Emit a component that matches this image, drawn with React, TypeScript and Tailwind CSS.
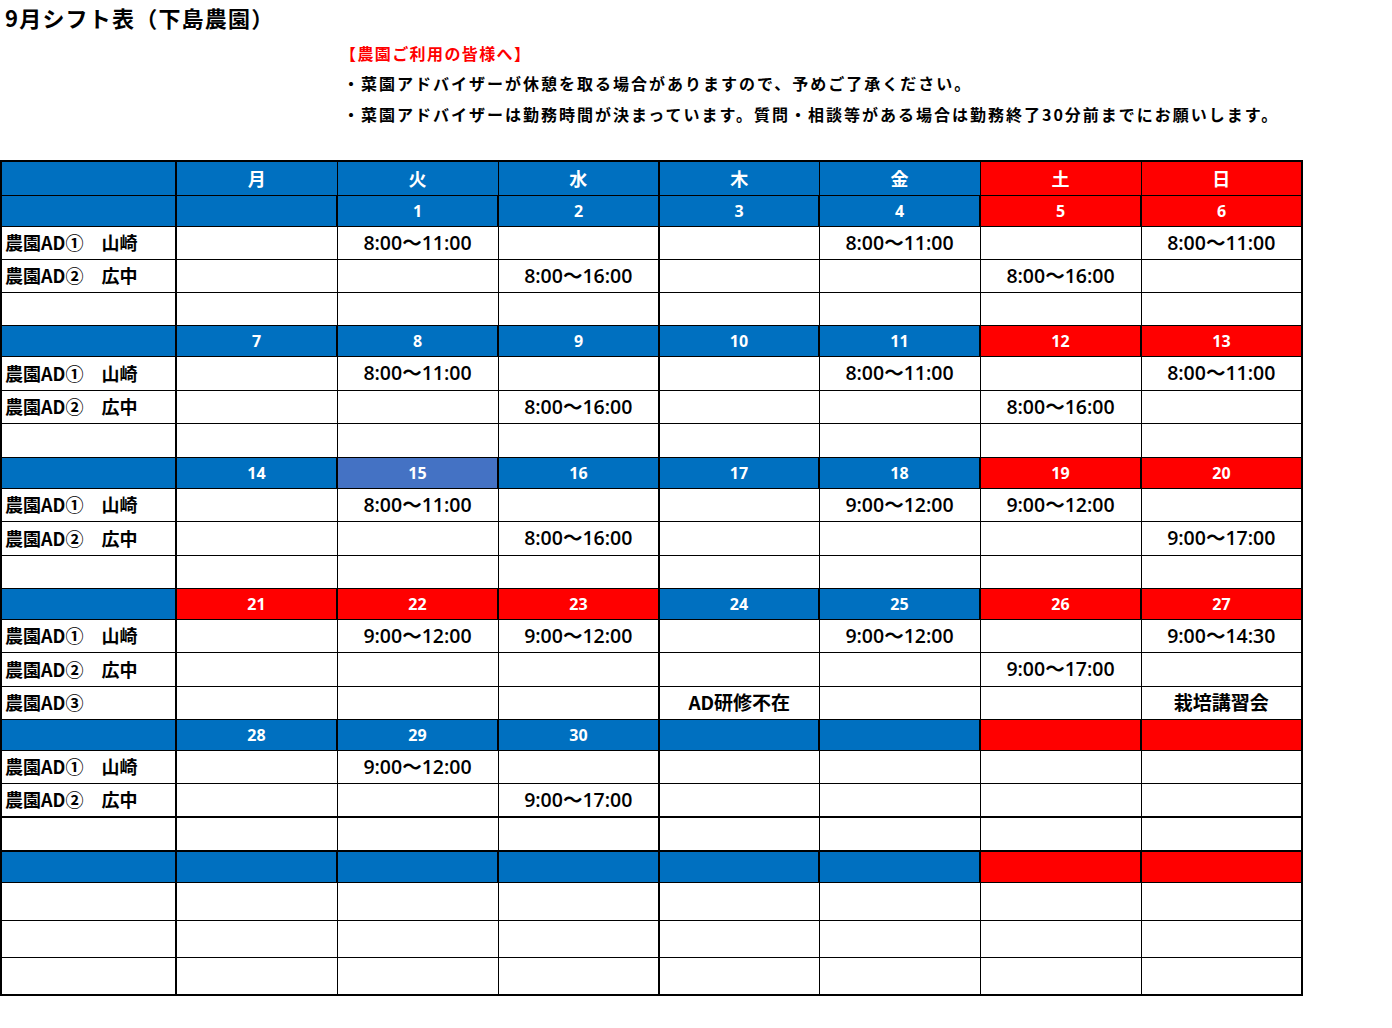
import React from "react";

type Color = "b" | "r" | "h";
type Row = { label: string; cells: string[]; h: string; thickBottom?: boolean };
type Week = { dates: [string, Color][]; rows: Row[]; thickTop?: boolean };

const T1 = "8:00～11:00";
const T2 = "8:00～16:00";
const T3 = "9:00～12:00";
const T4 = "9:00～17:00";
const E = ["", "", "", "", "", "", ""];

const std = (ds: string[], colors: Color[]) => ds.map((d, i) => [d, colors[i]] as [string, Color]);
const C1: Color[] = ["b", "b", "b", "b", "b", "r", "r"];

const weeks: Week[] = [
  {
    dates: std(["", "1", "2", "3", "4", "5", "6"], C1),
    rows: [
      { label: "農園AD①　山崎", cells: ["", T1, "", "", T1, "", T1], h: "h-[33px]" },
      { label: "農園AD②　広中", cells: ["", "", T2, "", "", T2, ""], h: "h-[33px]" },
      { label: "", cells: E, h: "h-[33px]" },
    ],
  },
  {
    dates: std(["7", "8", "9", "10", "11", "12", "13"], C1),
    rows: [
      { label: "農園AD①　山崎", cells: ["", T1, "", "", T1, "", T1], h: "h-[34px]" },
      { label: "農園AD②　広中", cells: ["", "", T2, "", "", T2, ""], h: "h-[33px]" },
      { label: "", cells: E, h: "h-[34px]" },
    ],
  },
  {
    dates: std(["14", "15", "16", "17", "18", "19", "20"], ["b", "h", "b", "b", "b", "r", "r"]),
    rows: [
      { label: "農園AD①　山崎", cells: ["", T1, "", "", T3, T3, ""], h: "h-[33px]" },
      { label: "農園AD②　広中", cells: ["", "", T2, "", "", "", T4], h: "h-[34px]" },
      { label: "", cells: E, h: "h-[33px]" },
    ],
  },
  {
    dates: std(["21", "22", "23", "24", "25", "26", "27"], ["r", "r", "r", "b", "b", "r", "r"]),
    rows: [
      { label: "農園AD①　山崎", cells: ["", T3, T3, "", T3, "", "9:00～14:30"], h: "h-[33px]" },
      { label: "農園AD②　広中", cells: ["", "", "", "", "", T4, ""], h: "h-[34px]" },
      { label: "農園AD③", cells: ["", "", "", "AD研修不在", "", "", "栽培講習会"], h: "h-[33px]" },
    ],
  },
  {
    dates: std(["28", "29", "30", "", "", "", ""], C1),
    rows: [
      { label: "農園AD①　山崎", cells: ["", T3, "", "", "", "", ""], h: "h-[33px]" },
      { label: "農園AD②　広中", cells: ["", "", T4, "", "", "", ""], h: "h-[34px]", thickBottom: true },
      { label: "", cells: E, h: "h-[34px]", thickBottom: true },
    ],
  },
  {
    dates: std(["", "", "", "", "", "", ""], C1),
    rows: [
      { label: "", cells: E, h: "h-[38px]" },
      { label: "", cells: E, h: "h-[37px]" },
      { label: "", cells: E, h: "h-[38px]" },
    ],
    thickTop: true,
  },
];

const bg = (c: Color) => (c === "r" ? "bg-[#ff0000]" : c === "h" ? "bg-[#4472c4]" : "bg-[#0070c0]");

const weekdays: [string, Color][] = [
  ["月", "b"],
  ["火", "b"],
  ["水", "b"],
  ["木", "b"],
  ["金", "b"],
  ["土", "r"],
  ["日", "r"],
];

const font = { fontFamily: '"Noto Sans CJK JP", "Noto Sans", sans-serif' };
const timeFont = { fontFamily: '"Open Sans", "Noto Sans CJK JP", sans-serif' };

export default function App() {
  return (
    <div className="bg-white w-[1392px] min-h-[1028px] text-black" style={font}>
      <div className="pl-[5px] pt-[2px] text-[22px] font-bold leading-[30px] tracking-[1.2px]">9月シフト表（下島農園）</div>
      <div className="ml-[343px] mt-[6px] text-[16px] font-bold tracking-[2px]">
        <div className="leading-[30px] text-[#ff0000] -ml-[3px] tracking-[1.4px]">【農園ご利用の皆様へ】</div>
        <div className="leading-[31px]">・菜園アドバイザーが休憩を取る場合がありますので、予めご了承ください。</div>
        <div className="leading-[31px]">・菜園アドバイザーは勤務時間が決まっています。質問・相談等がある場合は勤務終了30分前までにお願いします。</div>
      </div>
      <table className="mt-[30px] border-collapse table-fixed w-[1302px] border-2 border-black">
        <colgroup>
          <col className="w-[175px]" />
          <col className="w-[161px]" />
          <col className="w-[161px]" />
          <col className="w-[161px]" />
          <col className="w-[160px]" />
          <col className="w-[161px]" />
          <col className="w-[161px]" />
          <col className="w-[161px]" />
        </colgroup>
        <tbody>
          <tr className="h-[34px]">
            <td className="bg-[#0070c0] border border-black border-r-2"></td>
            {weekdays.map(([w, c], i) => (
              <td
                key={i}
                className={`${bg(c)} border border-black text-white text-center text-[18px] font-bold p-0 ${i === 3 ? "border-l-2" : ""}`}
              >
                {w}
              </td>
            ))}
          </tr>
          {weeks.map((wk, wi) => (
            <React.Fragment key={wi}>
              <tr className="h-[31px]">
                <td className={`bg-[#0070c0] border border-black border-r-2 ${wk.thickTop ? "border-t-2" : ""}`}></td>
                {wk.dates.map(([d, c], i) => (
                  <td
                    key={i}
                    className={`${bg(c)} border border-black border-x-2 text-white text-center text-[16px] font-bold p-0 leading-none ${wk.thickTop ? "border-t-2" : ""}`}
                    style={timeFont}
                  >
                    {d}
                  </td>
                ))}
              </tr>
              {wk.rows.map((r, ri) => {
                const bb = r.thickBottom ? "border-b-2" : "";
                return (
                  <tr key={ri} className={r.h}>
                    <td className={`border border-black border-r-2 pl-[3px] text-[18px] font-bold whitespace-nowrap p-0 ${bb}`}>
                      {r.label}
                    </td>
                    {r.cells.map((c, ci) => {
                      const jp = c.startsWith("A") || c.startsWith("栽");
                      return (
                        <td
                          key={ci}
                          className={`border border-black text-center p-0 whitespace-nowrap ${ci === 3 ? "border-l-2" : ""} ${bb} ${
                            jp ? "text-[19px] font-bold" : "text-[19.5px] font-semibold"
                          }`}
                          style={jp ? font : timeFont}
                        >
                          {c}
                        </td>
                      );
                    })}
                  </tr>
                );
              })}
            </React.Fragment>
          ))}
        </tbody>
      </table>
    </div>
  );
}
